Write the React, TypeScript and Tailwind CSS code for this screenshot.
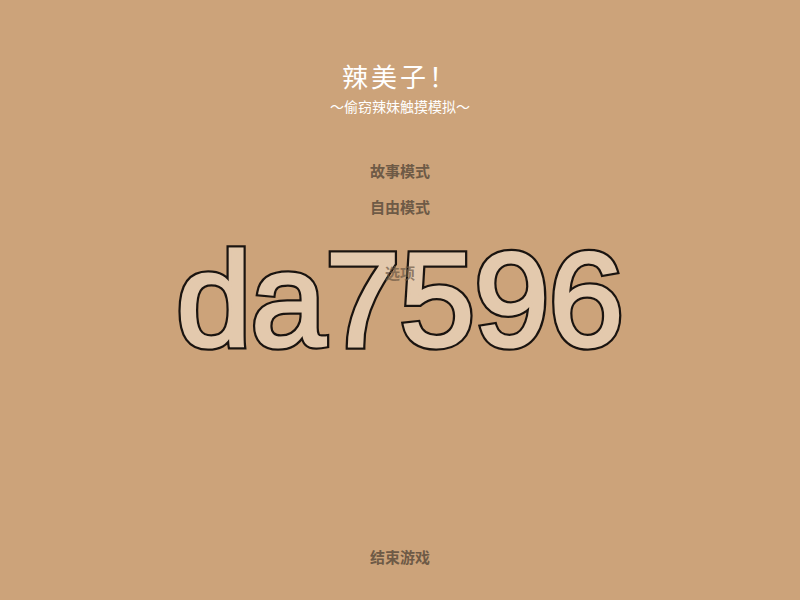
import React from "react";

export default function App() {
  const menu = "text-[15px] font-bold text-[#6e5a46] leading-none";
  const big = "text-[134px] leading-none whitespace-nowrap";
  const bigFont = { fontFamily: '"Liberation Sans", Arial, sans-serif' };
  return (
    <div className="relative w-[800px] h-[600px] overflow-hidden bg-[#cca37a]" style={{ fontFamily: '"Noto Sans CJK SC", "Noto Sans", sans-serif' }}>
      <div className="absolute inset-0 flex items-center justify-center pointer-events-none">
        <div className="relative">
          <div className={big + " text-[#1a1410]"} style={{ ...bigFont, WebkitTextStroke: "7.5px #1a1410" }}>
            da7596
          </div>
          <div
            className={big + " absolute inset-0 text-[#e3c9ad]"}
            style={{ ...bigFont, WebkitTextStroke: "3px #e3c9ad" }}
          >
            da7596
          </div>
        </div>
      </div>
      <div className="relative flex flex-col items-center h-full">
        <div className="mt-[63px] text-[26px] leading-none text-white tracking-[3px]">辣美子！</div>
        <div className="mt-[10px] text-[14px] leading-none text-white">～偷窃辣妹触摸模拟～</div>
        <div className="mt-[50px] flex flex-col items-center">
          <div className={menu}>故事模式</div>
          <div className={menu + " mt-[21px]"}>自由模式</div>
          <div className={menu + " mt-[51px] opacity-70"}>选项</div>
        </div>
        <div className="mt-auto mb-[36px]">
          <div className={menu}>结束游戏</div>
        </div>
      </div>
    </div>
  );
}
